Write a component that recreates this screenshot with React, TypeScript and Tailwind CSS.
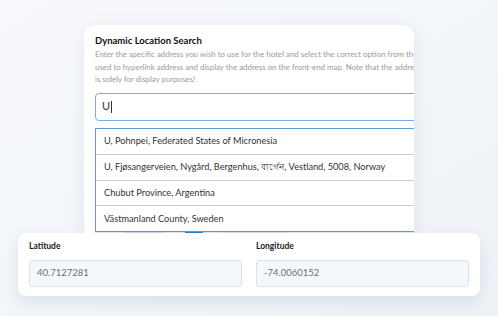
const font = { fontFamily: "Lato, 'Noto Sans', sans-serif" };

const places = [
  "U, Pohnpei, Federated States of Micronesia",
  "U, Fjøsangerveien, Nygård, Bergenhus, বার্গেন, Vestland, 5008, Norway",
  "Chubut Province, Argentina",
  "Västmanland County, Sweden",
];

function CoordField({ label, value }: { label: string; value: string }) {
  return (
    <div className="flex flex-1 flex-col">
      <label className="text-[8.5px] font-bold leading-[12px] text-[#1a1a1a]">{label}</label>
      <div className="mt-[8px] flex h-[27px] items-center rounded-[3px] border border-[#dde2ea] bg-[#f4f7fc] px-[7px] text-[9.5px] text-[#6b6f75]">
        {value}
      </div>
    </div>
  );
}

export default function App() {
  return (
    <div
      style={font}
      className="flex h-[316px] w-[498px] flex-col overflow-hidden bg-gradient-to-br from-[#f7f9fc] to-[#eef2f7]"
    >
      <div className="ml-[84px] mt-[25px] h-[208px] w-[330px] shrink-0 overflow-hidden rounded-t-[12px] bg-white shadow-[0_4px_20px_rgba(30,50,90,0.08)]">
        <div className="w-[440px] pl-[11px] pt-[9px]">
          <h2 className="text-[9.5px] font-bold leading-[13px] text-[#111]">Dynamic Location Search</h2>
          <div className="mt-[1px] text-[7.9px] leading-[12.5px] text-[#9a9a9a]">
            <p className="whitespace-nowrap">
              Enter the specific address you wish to use for the hotel and select the correct option from the
            </p>
            <p className="whitespace-nowrap">
              used to hyperlink address and display the address on the front-end map. Note that the address
            </p>
            <p className="whitespace-nowrap">is solely for display purposes!</p>
          </div>
          <div className="mt-[7px] flex h-[28px] items-center rounded-[4px] border-[1.5px] border-[#74aeea] pl-[6px] text-[11px] text-[#333]">
            U<span className="ml-[1px] inline-block h-[12px] w-px bg-[#333]" />
          </div>
          <div className="mt-[7px] border border-[#5f9bd8] bg-white">
            {places.map((p, i) => (
              <div
                key={p}
                className={`flex h-[25.6px] items-center whitespace-nowrap px-[8px] text-[9.2px] text-[#333] ${i > 0 ? "border-t border-[#c9ced6]" : ""}`}
              >
                {p}
              </div>
            ))}
          </div>
          <div className="flex h-[6px] gap-[20px] bg-[#dfe8f1] px-[30px]">
            <div className="h-full w-[40px] bg-[#c9d8e8]" />
            <div className="h-full w-[18px] bg-[#2f7cd0]" />
            <div className="h-full w-[60px] bg-[#d3dfeb]" />
          </div>
        </div>
      </div>
      <div className="mx-[18px] flex h-[63px] shrink-0 gap-[14px] rounded-[8px] bg-white px-[11px] pt-[7px] shadow-[0_6px_16px_rgba(30,50,90,0.1)]">
        <CoordField label="Latitude" value="40.7127281" />
        <CoordField label="Longitude" value="-74.0060152" />
      </div>
    </div>
  );
}
